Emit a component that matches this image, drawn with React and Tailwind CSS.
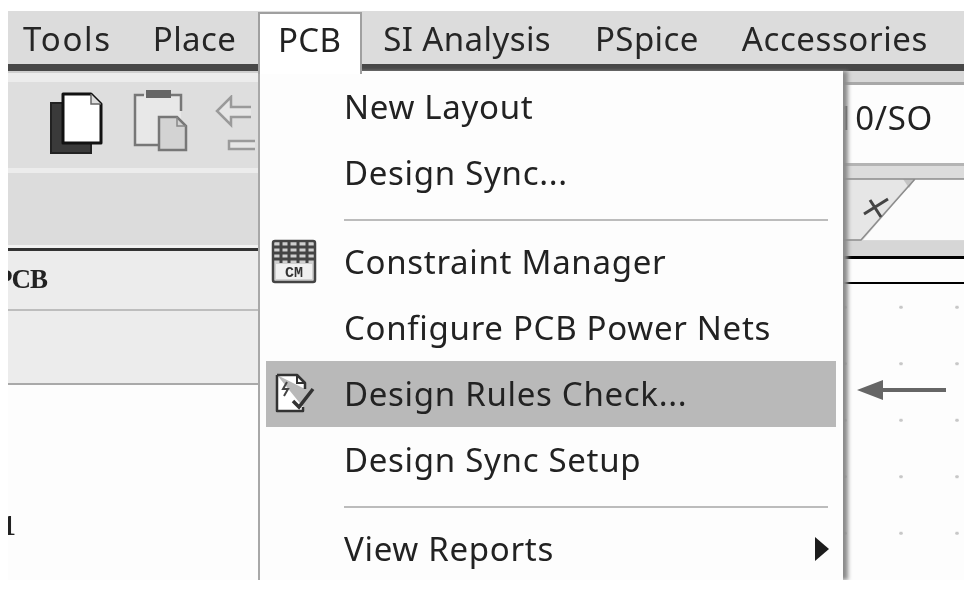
const font = { fontFamily: '"Noto Sans", sans-serif' };
const mono = { fontFamily: '"Liberation Mono", monospace' };
const slab = { fontFamily: '"Liberation Serif", serif' };

function MenuItem({ label, icon, active, arrow }) {
  return (
    <div className={`h-[66px] flex items-center relative ml-[6px] mr-[7px] ${active ? "bg-[#b9b9b9]" : ""}`}>
      <div className="w-[78px] flex justify-start pl-[5px] shrink-0">{icon}</div>
      <span className="text-[#222] text-[33px] leading-none tracking-[0.7px] whitespace-nowrap pb-[2px]">{label}</span>
      {arrow && (
        <svg className="absolute right-[7px] top-[21px]" width="14" height="24" viewBox="0 0 14 24">
          <path d="M0 0 L14 12 L0 24 Z" fill="#1c1c1c" />
        </svg>
      )}
    </div>
  );
}

function Sep({ bottom }) {
  return <div className={`h-[2px] bg-[#bcbcbc] ml-[84px] mr-[15px] mt-[13px] ${bottom}`} />;
}

const CmIcon = (
  <svg width="46" height="46" viewBox="0 0 46 46">
    <rect x="2" y="2" width="42" height="41" rx="2" fill="#cfcfcf" stroke="#444" strokeWidth="2.5" />
    <path d="M2 8H44M2 14H44M2 20H44M10 2V24M18 2V24M27 2V24M36 2V24" stroke="#444" strokeWidth="3" fill="none" />
    <rect x="5" y="25" width="36" height="15" fill="#f0f0f0" />
    <text x="23" y="38" textAnchor="middle" fontSize="15" fontWeight="700" fill="#333" style={mono}>CM</text>
  </svg>
);

const RulesIcon = (
  <svg width="46" height="46" viewBox="0 0 46 46" fill="none">
    <path d="M6 4 H26 L34 12 V18 M6 4 V40 H32 V36" stroke="#333" strokeWidth="2.5" fill="#fff" strokeLinejoin="round" />
    <path d="M26 4 V12 H34" stroke="#333" strokeWidth="2" />
    <path d="M16 11 L12 18 H17 L13 25" stroke="#444" strokeWidth="2" />
    <path d="M22 30 L28 36 L42 18" stroke="#333" strokeWidth="3.5" />
  </svg>
);

export default function App() {
  return (
    <div className="w-[964px] h-[600px] bg-white overflow-hidden pl-2 pt-[11px]" style={font}>
      <div className="relative w-[956px] h-[569px] overflow-hidden bg-white blur-[0.5px]">
        {/* menu bar */}
        <div className="h-[53px] bg-[#dcdcdc] flex items-center text-[#262626] text-[33px] leading-none tracking-[0.4px] whitespace-nowrap pt-[2px]">
          <span className="ml-[15px] tracking-[1.7px]">Tools</span>
          <span className="ml-[41px]">Place</span>
          <span className="ml-[147px]">SI Analysis</span>
          <span className="ml-[44px]">PSpice</span>
          <span className="ml-[43px] tracking-[0.6px]">Accessories</span>
        </div>
        <div className="h-[7px] bg-[#474747]" />

        <div className="flex h-[509px]">
          {/* left pane */}
          <div className="w-[250px] shrink-0 flex flex-col">
            <div className="h-[102px] bg-[#dedede] flex flex-col">
              <div className="h-[11px] bg-[#ececec] border-t-2 border-[#cfcfcf]" />
              <div className="flex-1 flex items-center pl-[42px] gap-[29px] pb-[10px]">
                <svg width="54" height="64" viewBox="0 0 54 64" className="shrink-0 mt-[8px]">
                  <rect x="1" y="11" width="40" height="50" fill="#3a3a3a" stroke="#222" strokeWidth="2" />
                  <path d="M13 2 H41 L51 12 V51 H13 Z" fill="#fff" stroke="#111" strokeWidth="3" strokeLinejoin="round" />
                  <path d="M41 2 V12 H51" fill="#ddd" stroke="#666" strokeWidth="1.5" />
                </svg>
                <svg width="56" height="66" viewBox="0 0 56 66" fill="none" className="shrink-0">
                  <rect x="2" y="8" width="46" height="50" fill="#e8e8e8" />
                  <path d="M11 8 H2 V58 H26 M38 8 H48 V24" stroke="#777" strokeWidth="2.5" />
                  <rect x="13" y="3" width="25" height="8" fill="#666" />
                  <path d="M26 30 H44 L53 39 V63 H26 Z" fill="#d3d3d3" stroke="#777" strokeWidth="2.5" />
                  <path d="M44 30 V39 H53" stroke="#888" strokeWidth="1.5" />
                </svg>
                <svg width="40" height="60" viewBox="0 0 40 60" fill="none" className="-ml-[3px] shrink-0 mt-[10px]">
                  <path d="M36 22 H16 V30 L2 16 L16 2 V12 H36" stroke="#9a9a9a" strokeWidth="2.5" fill="#e6e6e6" />
                  <path d="M40 46 H14 V54 H40" stroke="#9a9a9a" strokeWidth="2.5" fill="#e6e6e6" />
                </svg>
              </div>
              <div className="h-[5px] bg-[#ececec]" />
            </div>
            <div className="h-[75px] bg-[#dcdcdc] border-b-[3px] border-[#f2f2f2]" />
            <div className="h-[3px] bg-[#333]" />
            <div className="h-[58px] bg-[#ececec] flex items-center overflow-hidden pb-[2px]">
              <span className="text-[27px] font-bold text-[#222] -ml-[12px] leading-none tracking-[-1px]" style={slab}>PCB</span>
            </div>
            <div className="h-[2px] bg-[#bdbdbd]" />
            <div className="h-[72px] bg-[#ececec]" />
            <div className="h-[2px] bg-[#a9a9a9]" />
            <div className="flex-1 bg-[#fdfdfd] overflow-hidden pt-[125px]">
              <span className="block text-[30px] font-bold text-[#222] -ml-[7px] leading-none" style={slab}>1</span>
            </div>
          </div>

          {/* right pane */}
          <div className="flex-1 flex flex-col min-w-0">
            <div className="h-[14px] bg-[#d8d8d8] border-b-[3px] border-[#a8a8a8]" />
            <div className="h-[78px] bg-[#fdfdfd] flex items-center justify-end pr-[31px] pb-[14px]">
              <span className="text-[33px] leading-none text-[#222] tracking-[0.7px]">10/SO</span>
            </div>
            <div className="h-[15px] bg-[#dcdcdc] border-t-[3px] border-[#b4b4b4]" />
            <div className="h-[63px] bg-[#dadada] flex overflow-hidden">
              <div className="w-[585px] shrink-0" />
              <svg width="121" height="63" viewBox="0 0 121 63" className="shrink-0">
                <path d="M0 1 H70 L17 62 H0 Z" fill="#e6e6e6" />
                <path d="M72 1 H121 V62 H20 Z" fill="#fcfcfc" />
                <path d="M60 1 H72 L66 10 Z" fill="#c4c4c4" />
                <path d="M0 1 H121 M72 1 L18 62 H0" fill="none" stroke="#8c8c8c" strokeWidth="1.5" />
                <path d="M21 36 L45 21 M27 22 L38 39" stroke="#444" strokeWidth="3" fill="none" />
              </svg>
            </div>
            <div className="h-[15px] bg-[#d6d6d6]" />
            <div className="h-[3px] bg-black" />
            <div className="h-[23px] bg-[#fdfdfd]" />
            <div className="h-[2px] bg-black" />
            <div className="flex-1 bg-[#fdfdfd] bg-[radial-gradient(circle,#c8c8c8_1.5px,transparent_2px)] bg-[size:56px_56.5px] bg-[position:615px_-5px]" />
          </div>
        </div>

        {/* PCB tab + dropdown */}
        <div className="absolute left-[250px] top-px w-[104px] h-[62px] bg-white border-t-2 border-x-2 border-[#a0a0a0] z-20 pl-[18px] text-[#222] text-[33px] leading-none pt-[9px] tracking-[0.4px]">PCB</div>
        <div className="absolute left-[250px] top-[60px] w-[585px] h-[509px] bg-[#fdfdfd] border-l-2 border-[#a8a8a8] shadow-[5px_0_4px_#8c8c8c] z-10 pt-[3px]">
          <MenuItem label="New Layout" />
          <MenuItem label="Design Sync..." />
          <Sep bottom="mb-[8px]" />
          <MenuItem label="Constraint Manager" icon={CmIcon} />
          <MenuItem label="Configure PCB Power Nets" />
          <MenuItem label="Design Rules Check..." icon={RulesIcon} active />
          <MenuItem label="Design Sync Setup" />
          <Sep bottom="mb-[8px]" />
          <MenuItem label="View Reports" arrow />
        </div>

        {/* annotation arrow */}
        <svg className="absolute left-[849px] top-[367px] z-30" width="92" height="24" viewBox="0 0 92 24">
          <path d="M0 12 L26 2 V10 H89 V14 H26 V22 Z" fill="#666" />
        </svg>
      </div>
    </div>
  );
}
